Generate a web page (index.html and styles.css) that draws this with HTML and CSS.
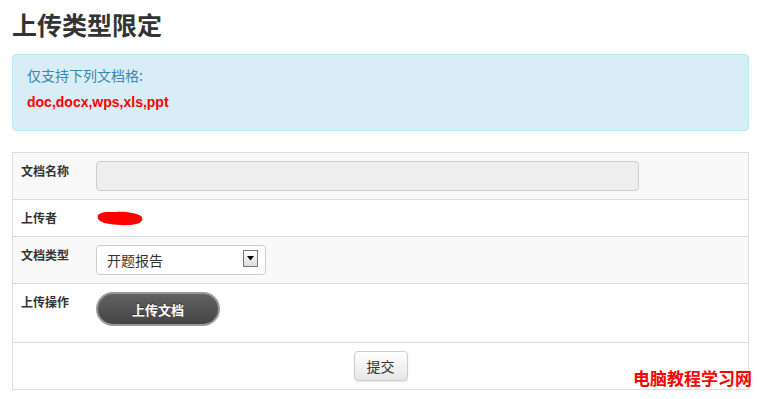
FILE: index.html
```html
<!DOCTYPE html>
<html lang="zh-CN">
<head>
    <meta charset="UTF-8">
    <meta name="viewport" content="width=device-width, initial-scale=1.0">
    <title>上传类型限定</title>
    <link rel="stylesheet" href="styles.css">
</head>
<body>
    <div class="page">
        <h1>上传类型限定</h1>

        <div class="alert">
            <p class="alert-title">仅支持下列文档格:</p>
            <p class="alert-types">doc,docx,wps,xls,ppt</p>
        </div>

        <form id="upload-form" method="POST" action="/upload">
            <table class="form-table">
                <tr class="row-striped">
                    <th>文档名称</th>
                    <td><input type="text" class="doc-name" name="name" disabled></td>
                </tr>
                <tr>
                    <th>上传者</th>
                    <td>
                        <!-- name painted over in the screenshot -->
                        <svg class="blot" width="48" height="16" viewBox="0 0 48 16">
                            <path d="M2 5 C6 1 14 2 20 2 C28 1 40 3 45 6 C48 9 46 13 40 14 C32 16 22 15 14 14 C6 13 0 10 2 5 Z" fill="#ff0000"/>
                        </svg>
                    </td>
                </tr>
                <tr class="row-striped">
                    <th>文档类型</th>
                    <td>
                        <div class="select-wrap">
                            <select class="doc-type" name="type">
                                <option>开题报告</option>
                                <option>中期报告</option>
                                <option>毕业论文</option>
                            </select>
                            <span class="select-arrow">
                                <svg width="9" height="5" viewBox="0 0 9 5"><path d="M1 0 H8 L4.5 4.5 Z" fill="#000"/></svg>
                            </span>
                        </div>
                    </td>
                </tr>
                <tr>
                    <th>上传操作</th>
                    <td><button type="button" class="upload-button">上传文档</button></td>
                </tr>
                <tr>
                    <td colspan="2" class="submit-cell"><button type="submit" class="submit-button">提交</button></td>
                </tr>
            </table>
        </form>
    </div>

    <div class="watermark">电脑教程学习网</div>
</body>
</html>
```

FILE: styles.css
```css
body {
    font-family: "Noto Sans CJK SC", "DejaVu Sans", sans-serif;
    background-color: #ffffff;
    color: #333333;
    margin: 0;
    padding: 0;
}

.page {
    width: 737px;
    padding: 0 9px 0 12px;
}

h1 {
    font-size: 25px;
    font-weight: bold;
    line-height: 34px;
    margin: 7px 0 13px;
    color: #333333;
}

.alert {
    background-color: #d9edf7;
    border: 1px solid #bce8f1;
    border-radius: 4px;
    padding: 8px 14px 16px;
    margin-bottom: 21px;
}

.alert p {
    margin: 0;
    line-height: 24px;
}

.alert-title {
    font-size: 14px;
    color: #3a87ad;
}

.alert-types {
    margin-top: 3px !important;
    font-family: "Liberation Sans", Arial, sans-serif;
    font-size: 14px;
    font-weight: bold;
    color: #ff0000;
}

.form-table {
    width: 100%;
    border-collapse: collapse;
    table-layout: fixed;
    border: 1px solid #dddddd;
}

.form-table th,
.form-table td {
    border-top: 1px solid #dddddd;
    padding: 8px;
    vertical-align: top;
    text-align: left;
    line-height: 20px;
}

.form-table th {
    width: 59px;
    font-size: 12px;
    font-weight: bold;
    color: #333333;
}

.row-striped th,
.row-striped td {
    background-color: #f9f9f9;
}

.doc-name {
    display: block;
    width: 543px;
    height: 30px;
    box-sizing: border-box;
    margin: 0;
    background-color: #eeeeee;
    border: 1px solid #cccccc;
    border-radius: 4px;
}

.blot {
    display: block;
    margin-top: 2px;
}

.select-wrap {
    position: relative;
    width: 170px;
    height: 30px;
}

.doc-type {
    width: 100%;
    height: 30px;
    appearance: none;
    -webkit-appearance: none;
    background-color: #ffffff;
    border: 1px solid #cccccc;
    border-radius: 4px;
    padding: 0 10px;
    font-family: "Noto Sans CJK SC", sans-serif;
    font-size: 14px;
    color: #333333;
}

.select-arrow {
    position: absolute;
    top: 5px;
    right: 8px;
    width: 13px;
    height: 15px;
    border: 1px solid #777777;
    background: linear-gradient(#ffffff, #dddddd);
    display: flex;
    align-items: center;
    justify-content: center;
    pointer-events: none;
}

.upload-button {
    display: block;
    width: 124px;
    height: 34px;
    margin-bottom: 8px;
    background: linear-gradient(#626262, #444444);
    border: 2px solid #999999;
    border-radius: 17px;
    color: #ffffff;
    font-family: "Noto Sans CJK SC", sans-serif;
    font-size: 13px;
    font-weight: bold;
    text-shadow: 0 -1px 0 rgba(0, 0, 0, 0.4);
    cursor: pointer;
}

.submit-cell {
    text-align: center !important;
}

.submit-button {
    width: 54px;
    height: 30px;
    background: linear-gradient(#ffffff, #e6e6e6);
    border: 1px solid #cccccc;
    border-radius: 4px;
    box-shadow: 0 1px 2px rgba(0, 0, 0, 0.1);
    font-family: "Noto Sans CJK SC", sans-serif;
    font-size: 14px;
    color: #333333;
    cursor: pointer;
}

.watermark {
    position: absolute;
    left: 633px;
    top: 366px;
    font-size: 17px;
    font-weight: bold;
    color: #ff0000;
    line-height: 24px;
}
```
